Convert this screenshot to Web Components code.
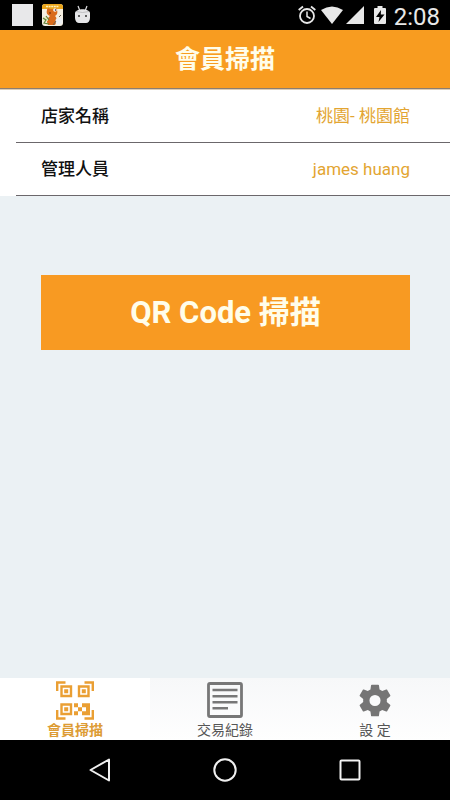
<!DOCTYPE html>
<html lang="zh-Hant">
<head>
  <meta charset="UTF-8" />
  <meta name="viewport" content="width=device-width, initial-scale=1" />
  <title>會員掃描</title>
  <style>
    html,
    body {
      height: 100%;
      margin: 0;
    }
    body {
      font-family: Roboto, "Noto Sans CJK TC", sans-serif;
      background-color: #ebf1f4;
    }
  </style>
</head>
<body>
  <member-app></member-app>

  <script>
    class StatusBar extends HTMLElement {
      constructor() {
        super();
        this.shadowDOM = this.attachShadow({ mode: "open" });
      }

      connectedCallback() {
        this.render();
      }

      render() {
        this.shadowDOM.innerHTML = `
        <style>
          :host {
            display: flex;
            align-items: center;
            justify-content: space-between;
            height: 30px;
            padding: 0 10px 0 12px;
            background-color: #000000;
            color: #e8e8e8;
          }
          .left,
          .right {
            display: flex;
            align-items: center;
          }
          .left {
            gap: 9px;
          }
          .right {
            gap: 4px;
          }
          svg {
            display: block;
          }
          .android {
            margin-left: 3px;
          }
          .signal {
            margin-left: -2px;
          }
          .battery {
            margin: 0 4px 0 6px;
          }
          time {
            font-size: 24px;
            line-height: 28px;
            padding-top: 4px;
          }
        </style>

        <div class="left">
          <svg width="21" height="22" viewBox="0 0 21 22"><rect width="21" height="22" fill="#e8e8ea"/></svg>
          <svg width="21" height="22" viewBox="0 0 21 22">
            <rect width="21" height="22" rx="3" fill="#f4efe2"/>
            <path d="M3 0h15a3 3 0 0 1 3 3v2H0V3a3 3 0 0 1 3-3z" fill="#e9a51c"/>
            <path d="M4 2.5h13" stroke="#fff0b8" stroke-width="1.4" stroke-dasharray="2 .6"/>
            <path d="M5 6c0-2 2-2 3-1h4c1-2 4-1 3 1 1 3 0 5-2 6 2 2 3 5 1 7l-1 2H6l-1-3c0-3 1-4 3-6-3-1-4-3-3-6z" fill="#d96c1d"/>
            <circle cx="13" cy="6" r="1.8" fill="#fff"/>
            <circle cx="13.5" cy="6" r=".8" fill="#222"/>
            <circle cx="8" cy="9" r="1" fill="#8a3a0d"/>
            <circle cx="3.5" cy="15" r="2.6" fill="#e9ecc2"/>
            <path d="M1 14l3 2-2 3 5 1M4 12l3 4" stroke="#65843c" stroke-width="1.2" fill="none"/>
            <circle cx="17" cy="17" r="3.5" fill="#eceff2"/>
            <path d="M17 13l2-2M14 17l-3 4" stroke="#6b6254" stroke-width="1"/>
          </svg>
          <svg class="android" width="15" height="20" viewBox="0 0 15 20">
            <path d="M3 1l2 5M12 1l-2 5" stroke="#dddddf" stroke-width="1.2"/>
            <path d="M0 8c1-5 14-5 15 0v5c0 3-2 5-4 5H4c-2 0-4-2-4-5z" fill="#e6e6e8"/>
            <path d="M1 6.5q6.500 2 13 0" stroke="#b5b5b7" stroke-width=".8" fill="none"/>
            <circle cx="4" cy="11" r="1" fill="#333"/>
            <circle cx="11" cy="11" r="1" fill="#333"/>
          </svg>
        </div>

        <div class="right">
          <svg width="18" height="20" viewBox="0 0 18 20" fill="none" stroke="#e8e8e8">
            <circle cx="9" cy="11" r="7" stroke-width="1.8"/>
            <path d="M9 6.5v5l3.5 2" stroke-width="1.5"/>
            <path d="M.7 5L5 1.5M17.300 5L13 1.500" stroke-width="1.8"/>
          </svg>
          <svg width="24" height="20" viewBox="0 0 24 20"><path d="M1 5Q12-2 23 5L12 19z" fill="#e8e8e8"/></svg>
          <svg class="signal" width="18" height="20" viewBox="0 0 18 20"><path d="M18 1v18H0z" fill="#e8e8e8"/></svg>
          <svg class="battery" width="12" height="20" viewBox="0 0 12 20">
            <path d="M3.5 1h5v2H11q1 0 1 1v14q0 1-1 1H1q-1 0-1-1V4q0-1 1-1h2.5z" fill="#e8e8e8"/>
            <path d="M7 5l-5 7h3.500L4.500 17l6-7.500H6.800z" fill="#000"/>
          </svg>
          <time>2:08</time>
        </div>
        `;
      }
    }

    class TitleBar extends HTMLElement {
      constructor() {
        super();
        this.shadowDOM = this.attachShadow({ mode: "open" });
      }

      connectedCallback() {
        this.render();
      }

      render() {
        this.shadowDOM.innerHTML = `
        <style>
          :host {
            display: block;
            padding-top: 2px;
            background-color: #f89c20;
            border-bottom: 1px solid #8c7d70;
          }
          h1 {
            margin: 0;
            color: #fffdea;
            font-size: 25px;
            font-weight: 700;
            line-height: 56px;
            text-align: center;
          }
        </style>

        <h1><slot></slot></h1>
        `;
      }
    }

    class InfoRow extends HTMLElement {
      constructor() {
        super();
        this.shadowDOM = this.attachShadow({ mode: "open" });
      }

      connectedCallback() {
        this.render();
      }

      render() {
        this.shadowDOM.innerHTML = `
        <style>
          :host {
            display: block;
            padding-left: 16px;
            background-color: #ffffff;
          }
          .row {
            display: flex;
            justify-content: space-between;
            padding: 0 40px 0 25px;
            border-bottom: 1px solid #6b676b;
            line-height: 52px;
          }
          .label {
            color: #111111;
            font-size: 17px;
            font-weight: 500;
          }
          .value {
            color: #e3a532;
            font-size: 17px;
          }
        </style>

        <div class="row">
          <span class="label">${this.getAttribute("label")}</span>
          <span class="value"><slot></slot></span>
        </div>
        `;
      }
    }

    class ScanButton extends HTMLElement {
      constructor() {
        super();
        this.shadowDOM = this.attachShadow({ mode: "open" });
      }

      connectedCallback() {
        this.render();
      }

      render() {
        this.shadowDOM.innerHTML = `
        <style>
          :host {
            display: block;
            padding: 79px 40px 0 41px;
          }
          button {
            display: block;
            width: 100%;
            padding: 0;
            border: 0;
            background-color: #f89a22;
            color: #fffdea;
            font-family: inherit;
            font-size: 31px;
            font-weight: 700;
            line-height: 75px;
          }
        </style>

        <button type="button"><slot></slot></button>
        `;
      }
    }

    class TabItem extends HTMLElement {
      constructor() {
        super();
        this.shadowDOM = this.attachShadow({ mode: "open" });
      }

      connectedCallback() {
        this.render();
      }

      render() {
        this.shadowDOM.innerHTML = `
        <style>
          :host {
            display: block;
            flex: 1;
            color: #555555;
            background: linear-gradient(#f7f8f9, #fefefe);
          }
          :host([active]) {
            color: #dd9c35;
            background: #ffffff;
            font-weight: 700;
          }
          button {
            display: flex;
            flex-direction: column;
            align-items: center;
            width: 100%;
            padding: 3px 0 0;
            border: 0;
            background: none;
            color: inherit;
            font: inherit;
            font-size: 14px;
            line-height: 20px;
          }
          ::slotted(svg) {
            display: block;
          }
        </style>

        <button type="button">
          <slot name="icon"></slot>
          <span><slot></slot></span>
        </button>
        `;
      }
    }

    class TabBar extends HTMLElement {
      constructor() {
        super();
        this.shadowDOM = this.attachShadow({ mode: "open" });
      }

      connectedCallback() {
        this.render();
      }

      render() {
        this.shadowDOM.innerHTML = `
        <style>
          :host {
            display: block;
          }
          nav {
            display: flex;
          }
        </style>

        <nav>
          <tab-item active>
            <svg slot="icon" width="38" height="39" viewBox="0 0 38 39">
              <g fill="none" stroke="#ea9f33" stroke-width="2.4">
                <path d="M9.500 1.500H1.200V10M28.500 1.500h8.300V10M9.500 37.500H1.200v-8.500M28.500 37.500h8.300v-8.500"/>
                <path d="M5.500 5.500h9.500v9.500H5.500zM23 5.500h9.500v9.500H23zM5.500 23.500h9.500v9.500H5.500z"/>
              </g>
              <g fill="#ea9f33">
                <path d="M8.200 8.200h4v4h-4zM25.800 8.200h4v4h-4zM8.200 26.200h4v4h-4z"/>
                <path d="M18 22.300h4v4h-4zM22 26.300h4v4h-4zM18 30.300h4v4h-4zM26 22.300h8v4h-8zM30 26.300h4v4h-4zM26 30.300h8v4h-8z"/>
              </g>
            </svg>
            會員掃描
          </tab-item>
          <tab-item>
            <svg slot="icon" width="38" height="39" viewBox="0 0 38 39" fill="none" stroke="#777">
              <rect x="2.500" y="2.500" width="33" height="33" rx="1.500" stroke-width="2.800"/>
              <path d="M6.500 9h25M6.500 15.300h25M6.500 21.300h25M6.500 27.300H22" stroke-width="2.600"/>
            </svg>
            交易紀錄
          </tab-item>
          <tab-item>
            <svg slot="icon" width="38" height="39" viewBox="0 0 24 24" fill="#757575">
              <path d="M19.430 12.980c.04-.32.07-.64.07-.98s-.03-.66-.07-.98l2.110-1.650c.19-.15.24-.42.12-.64l-2-3.460c-.12-.22-.39-.3-.61-.22l-2.490 1c-.52-.4-1.080-.73-1.690-.98l-.38-2.650A.488.488 0 0 0 14 2h-4c-.25 0-.46.18-.49.42l-.38 2.650c-.61.25-1.170.59-1.690.98l-2.490-1c-.23-.09-.49 0-.61.22l-2 3.460c-.13.22-.07.49.12.64l2.110 1.650c-.04.32-.07.65-.07.98s.03.66.07.98l-2.110 1.650c-.19.15-.24.42-.12.64l2 3.460c.12.22.39.3.61.22l2.490-1c.52.4 1.080.73 1.690.98l.38 2.650c.03.24.24.42.49.42h4c.25 0 .46-.18.49-.42l.38-2.650c.61-.25 1.170-.59 1.690-.98l2.490 1c.23.09.49 0 .61-.22l2-3.460c.12-.22.07-.49-.12-.64zM12 15.500a3.500 3.500 0 1 1 0-7 3.500 3.500 0 0 1 0 7z"/>
            </svg>
            設 定
          </tab-item>
        </nav>
        `;
      }
    }

    class SystemNav extends HTMLElement {
      constructor() {
        super();
        this.shadowDOM = this.attachShadow({ mode: "open" });
      }

      connectedCallback() {
        this.render();
      }

      render() {
        this.shadowDOM.innerHTML = `
        <style>
          :host {
            display: flex;
            justify-content: center;
            height: 60px;
            background-color: #000000;
          }
          button {
            display: flex;
            align-items: center;
            justify-content: center;
            width: 125px;
            padding: 0;
            border: 0;
            background: none;
          }
          svg {
            fill: none;
            stroke: #f0f0f0;
            stroke-width: 2;
          }
        </style>

        <button type="button" aria-label="返回">
          <svg width="24" height="24" viewBox="0 0 24 24"><path d="M21 1.500v21L2.500 12z" stroke-linejoin="round"/></svg>
        </button>
        <button type="button" aria-label="主畫面">
          <svg width="24" height="24" viewBox="0 0 24 24"><circle cx="12" cy="12" r="10.700"/></svg>
        </button>
        <button type="button" aria-label="最近使用">
          <svg width="24" height="24" viewBox="0 0 24 24"><rect x="2.500" y="2.500" width="19" height="19" rx="1"/></svg>
        </button>
        `;
      }
    }

    class MemberApp extends HTMLElement {
      constructor() {
        super();
        this.shadowDOM = this.attachShadow({ mode: "open" });
      }

      connectedCallback() {
        this.render();
      }

      render() {
        this.shadowDOM.innerHTML = `
        <style>
          :host {
            display: flex;
            flex-direction: column;
            min-height: 100%;
            background-color: #ebf1f4;
          }
          main {
            flex: 1;
            border-top: 1px solid #dccdb8;
          }
        </style>

        <status-bar></status-bar>
        <title-bar>會員掃描</title-bar>
        <main>
          <info-row label="店家名稱">桃園- 桃園館</info-row>
          <info-row label="管理人員">james huang</info-row>
          <scan-button>QR Code 掃描</scan-button>
        </main>
        <tab-bar></tab-bar>
        <system-nav></system-nav>
        `;
      }
    }

    customElements.define("status-bar", StatusBar);
    customElements.define("title-bar", TitleBar);
    customElements.define("info-row", InfoRow);
    customElements.define("scan-button", ScanButton);
    customElements.define("tab-item", TabItem);
    customElements.define("tab-bar", TabBar);
    customElements.define("system-nav", SystemNav);
    customElements.define("member-app", MemberApp);
  </script>
</body>
</html>
